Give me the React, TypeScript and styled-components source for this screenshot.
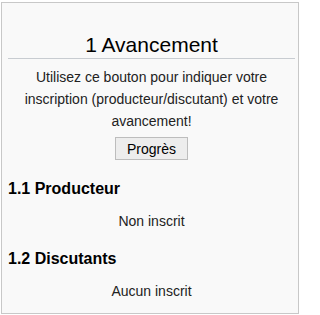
import React from "react";
import styled, { createGlobalStyle } from "styled-components";

const GlobalStyle = createGlobalStyle`
	html, body {
		margin: 0;
		padding: 0;
		background: #ffffff;
	}
	body {
		font-family: "Liberation Sans", Arial, sans-serif;
		color: #222222;
	}
`;

const Frame = styled.div`
	box-sizing: border-box;
	margin: 2px 0 0 1px;
	width: 298px;
	height: 312px;
	border: 1px solid #c8c8c8;
	background: #f9f9f9;
	padding: 0 3px 0 6px;
`;

const Title = styled.h2`
	margin: 0;
	padding: 31px 0 2px;
	font-size: 21px;
	font-weight: normal;
	line-height: 22px;
	text-align: center;
	color: #000000;
	border-bottom: 1px solid #c8ccd1;
`;

const Intro = styled.p`
	margin: 7px 0 0;
	font-size: 14px;
	line-height: 22px;
	text-align: center;
`;

const ButtonRow = styled.div`
	display: flex;
	justify-content: center;
	margin-top: 5px;
`;

const ProgressButton = styled.button`
	box-sizing: border-box;
	height: 23px;
	padding: 0 11px;
	font-family: inherit;
	font-size: 14px;
	color: #000000;
	background: #ededed;
	border: 1px solid #bdbdbd;
	border-radius: 0;
	cursor: pointer;
`;

const SubTitle = styled.h3`
	margin: 20px 0 0;
	font-size: 16px;
	font-weight: bold;
	line-height: 18px;
	color: #000000;
`;

const Status = styled.p`
	margin: 14px 0 0;
	font-size: 14px;
	line-height: 18px;
	text-align: center;
`;

export default function App() {
	return (
		<>
			<GlobalStyle />
			<Frame>
				<Title>1 Avancement</Title>
				<Intro>
					Utilisez ce bouton pour indiquer votre inscription
					(producteur/discutant) et votre avancement!
				</Intro>
				<ButtonRow>
					<ProgressButton>Progrès</ProgressButton>
				</ButtonRow>
				<SubTitle>1.1 Producteur</SubTitle>
				<Status>Non inscrit</Status>
				<SubTitle>1.2 Discutants</SubTitle>
				<Status>Aucun inscrit</Status>
			</Frame>
		</>
	);
}
